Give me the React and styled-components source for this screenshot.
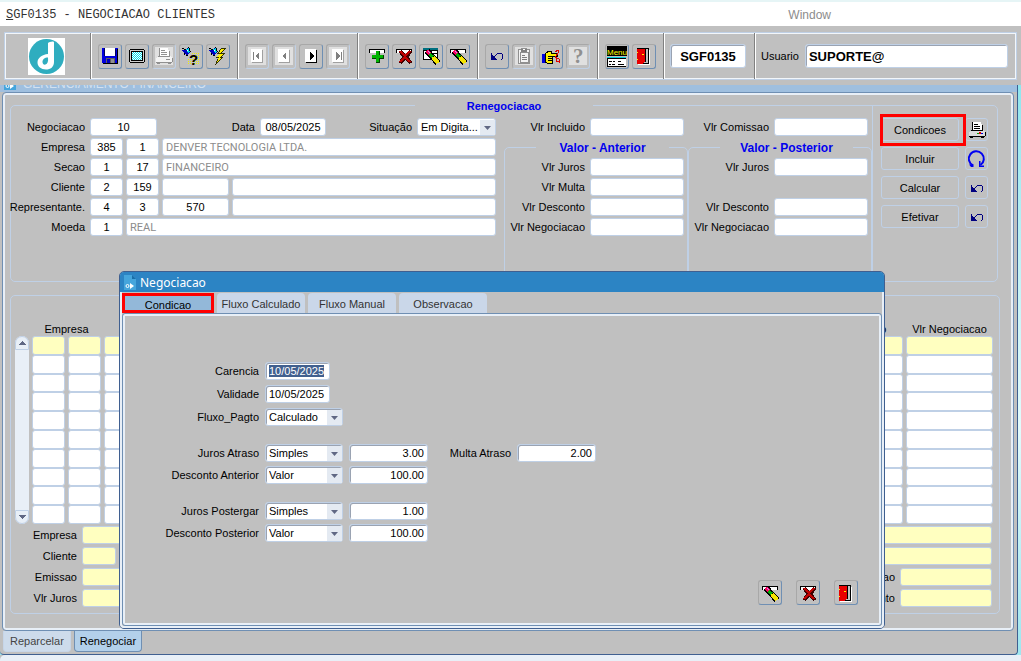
import React from 'react';
import styled, { createGlobalStyle, css } from 'styled-components';

const color = {
  face: '#c0c0c0',
  line: '#bfd0e6',
  light: '#e8eff7',
  steel: '#6f8fb3',
  dark: '#3f5f90',
  title: '#2c84c4',
  yellow: '#ffffc0',
  red: '#ff0000',
  navy: '#000080',
};

const GlobalStyle = createGlobalStyle`
  * {
    box-sizing: border-box;
  }

  body {
    margin: 0;
    background: ${color.face};
    color: #000;
    font-family: 'Liberation Sans', Arial, sans-serif;
    font-size: 11px;
    line-height: 14px;
  }

  button,
  input,
  select {
    font: inherit;
    color: inherit;
  }
`;

const Shell = styled.div`
  display: flex;
  flex-direction: column;
  min-height: 100vh;
`;

const MenuBar = styled.nav`
  display: flex;
  align-items: center;
  height: 26px;
  padding: 2px 190px 0 6px;
  border-top: 2px solid #e6f5f6;
  background: #fff;
  color: #333;
`;

const ProgramName = styled.span`
  flex: 1;
  font-family: 'Liberation Mono', monospace;
  font-size: 12px;
`;

const MenuLink = styled.a`
  color: #8c8c8c;
  font-size: 12px;
  text-decoration: none;
`;

const Toolbar = styled.div`
  display: flex;
  height: 48px;
  margin: 6px 4px 5px;
  border: 1px solid ${color.line};
  box-shadow: inset 1px 1px 0 #f2f6fa, inset -1px -1px 0 #f2f6fa;
`;

const LogoBox = styled.div`
  display: flex;
  align-items: center;
  justify-content: center;
  width: 85px;
  padding-right: 3px;
`;

const ToolGroup = styled.div`
  display: flex;
  align-items: center;
  gap: ${props => (props.$wide ? '6px' : '3px')};
  padding: ${props => (props.$wide ? '0 8px 0 6px' : '0 7px')};
  flex: ${props => (props.$grow ? '1' : 'none')};
  border-left: 1px solid #808080;
  box-shadow: inset 1px 0 0 #fff;
`;

const IconButton = styled.button`
  display: flex;
  align-items: center;
  justify-content: center;
  width: 24px;
  height: 25px;
  padding: 0;
  border: 1px solid #a8a8a8;
  border-right-color: ${color.steel};
  border-bottom-color: ${color.steel};
  border-radius: 3px;
  background: ${color.face};

  ${props =>
    props.disabled &&
    css`
      border-right-color: ${color.line};
      border-bottom-color: ${color.line};
    `}

  ${props =>
    props.$flat &&
    css`
      width: 23px;
      height: 23px;
      border-color: ${color.line};
    `}
`;

const TextInput = styled.input`
  width: ${props => (props.$width ? `${props.$width}px` : '0')};
  flex: ${props => (props.$width ? 'none' : '1')};
  min-width: 0;
  height: 18px;
  padding: 0 3px;
  border: 1px solid ${color.line};
  border-radius: 3px;
  outline: none;
  background: ${props => (props.$yellow ? color.yellow : '#fff')};
  text-align: ${props => props.$align || 'left'};

  &::selection {
    background: #41608f;
    color: #fff;
  }

  ${props =>
    props.$sunken &&
    css`
      box-shadow: inset 1px 1px 0 #9aa3b2;
    `}

  ${props =>
    props.$muted &&
    css`
      color: #8c8c8c;
      font-family: Roboto, sans-serif;
    `}
`;

const BigInput = styled(TextInput)`
  height: 24px;
  font-size: 13px;
  font-weight: bold;
`;

const Label = styled.label`
  width: ${props => (props.$width ? `${props.$width}px` : 'auto')};
  flex: ${props => (props.$grow ? '1' : 'none')};
  display: flex;
  justify-content: flex-end;
  white-space: nowrap;
`;

const Row = styled.div`
  display: flex;
  align-items: center;
  gap: ${props => props.$gap || 3}px;
  height: 18px;
`;

const Rows = styled.div`
  display: flex;
  flex-direction: column;
  gap: ${props => props.$gap || 2}px;
`;

const SelectBox = styled.div`
  position: relative;
  display: flex;
  width: ${props => props.$width}px;
  height: 18px;

  svg {
    position: absolute;
    top: 2px;
    right: 1px;
    pointer-events: none;
  }
`;

const Select = styled.select`
  appearance: none;
  width: 100%;
  padding: 0 16px 0 3px;
  border: 1px solid ${color.line};
  border-radius: 3px;
  outline: none;
  background: #fff;
  box-shadow: ${props => (props.$sunken ? 'inset 1px 1px 0 #9aa3b2' : 'none')};
`;

const Workspace = styled.div`
  display: flex;
  flex: 1;
  padding-right: 3px;
  background: linear-gradient(#8fe6ee, #c6f3f6 35%, #e2fbfc 60%, #9fe6ef);
`;

const MdiWindow = styled.main`
  position: relative;
  display: flex;
  flex: 1;
  flex-direction: column;
  min-width: 0;
  border-right: 1px solid ${color.dark};
  border-bottom: 1px solid ${color.dark};
  border-radius: 0 0 4px 4px;
  background: ${color.face};
`;

const MdiTitle = styled.div`
  display: flex;
  align-items: flex-end;
  gap: 7px;
  height: 7px;
  padding: 0 4px 2px;
  overflow: hidden;
  background: #9fbfdf;
  color: #d3e1f0;
  font-size: 12px;
  line-height: 12px;
`;

const TabPanel = styled.div`
  margin: 0 3px 0 2px;
  padding: 5px 12px 16px 5px;
  border: 1px solid ${color.steel};
  border-radius: 4px;
  box-shadow: inset 0 0 0 2px ${color.light};
`;

const Group = styled.fieldset`
  min-width: 0;
  margin: 0;
  padding: 0;
  border: 1px solid ${color.line};
  border-radius: 5px;
`;

const Legend = styled.legend`
  width: 178px;
  height: 14px;
  margin: 0 auto;
  padding: 0;
  color: #0000ee;
  font-weight: bold;
  line-height: 16px;
  text-align: center;
`;

const ValueLegend = styled(Legend)`
  width: 133px;
  margin-right: 15px;
  font-size: 12px;
`;

const HeaderGroup = styled(Group)`
  margin: 0 3px 0 2px;
`;

const Columns = styled.div`
  display: flex;
`;

const Identification = styled(Rows)`
  flex: 1;
  min-width: 0;
  padding: 6px 8px 45px 0;

  label {
    margin-right: 2px;
  }
`;

const ValueColumn = styled.div`
  display: flex;
  flex-direction: column;
  width: 184px;
  padding-top: 6px;

  > div {
    padding: 0 4px;
  }
`;

const ValueGroup = styled(Group)`
  flex: 1;
  margin-top: 4px;
  padding: 4px 3px 0;
`;

const Actions = styled.div`
  display: grid;
  grid-template-columns: 78px 23px;
  grid-auto-rows: 23px;
  gap: 6px;
  align-content: start;
  width: 125px;
  margin-top: -7px;
  padding: 13px 0 0 8px;
  border-left: 1px solid ${color.line};
`;

const ActionButton = styled.button`
  position: relative;
  padding: 0;
  border: 1px solid ${color.line};
  border-radius: 3px;
  background: ${color.face};
  white-space: nowrap;

  &::after {
    content: '';
    display: ${props => (props.$marked ? 'block' : 'none')};
    position: absolute;
    inset: -5px -8px -6px -2px;
    z-index: 1;
    border: 3px solid ${color.red};
  }
`;

const ListGroup = styled(Group)`
  margin: 13px 1px 0 2px;
  padding: 26px 3px 6px 0;
`;

const ListArea = styled.div`
  display: flex;
  align-items: flex-end;
  padding-left: 4px;
`;

const ScrollBar = styled.div`
  display: flex;
  flex-direction: column;
  justify-content: space-between;
  width: 14px;
  height: 188px;
  border-radius: 7px;
  background: ${color.light};
`;

const ScrollButton = styled.button`
  display: flex;
  align-items: center;
  justify-content: center;
  height: 14px;
  padding: 0;
  border: 1px solid ${color.line};
  border-radius: ${props => (props.$down ? '0 0 7px 7px' : '7px 7px 0 0')};
  background: ${color.light};
`;

const ListTable = styled.table`
  flex: 1;
  height: 202px;
  table-layout: fixed;
  border-collapse: separate;
  border-spacing: 3px 0;

  th {
    height: 14px;
    padding: 0;
    font-weight: normal;
    white-space: nowrap;
  }

  td {
    padding: 0;
    border: 1px solid ${color.line};
    border-radius: 3px;
    background: #fff;
  }

  tbody tr:first-child td {
    background: ${color.yellow};
  }
`;

const Details = styled(Rows)`
  margin-top: 2px;
  padding-right: 4px;
`;

const BottomTabs = styled.div`
  display: flex;
  gap: 3px;
  height: 23px;
  padding-left: 3px;
`;

const BottomTab = styled.button`
  height: 21px;
  padding: 0 6px;
  border: 1px solid #c6d5e8;
  border-top: 0;
  border-radius: 0 0 4px 4px;
  background: #cddbeb;
  color: #444;
  white-space: nowrap;

  &[aria-selected='true'] {
    padding: 0 5px;
    border-color: ${color.steel};
    background: #b3d0ea;
    color: #000;
  }
`;

const StatusBar = styled.footer`
  height: 6px;
  border-radius: 5px 0 0 0;
  background: ${color.light};
`;

const Dialog = styled.section`
  position: absolute;
  top: 186px;
  right: 132px;
  left: 119px;
  z-index: 2;
  border: 1px solid ${color.dark};
  border-radius: 5px;
  background: ${color.face};
`;

const DialogTitle = styled.h2`
  display: flex;
  align-items: center;
  gap: 4px;
  height: 20px;
  margin: 0;
  padding: 1px 4px 0;
  border-radius: 4px 4px 0 0;
  background: ${color.title};
  color: #fff;
  font-family: 'Noto Sans', sans-serif;
  font-size: 12px;
  font-weight: normal;
  line-height: 18px;
`;

const DialogBody = styled.div`
  border: 2px solid ${color.light};
  border-top: 0;
  border-radius: 0 0 4px 4px;
`;

const DialogTabs = styled.div`
  display: flex;
  gap: 3px;
  height: 21px;
  padding-top: 1px;
`;

const DialogTab = styled.button`
  width: ${props => props.$width || 88}px;
  padding: 2px 0 0;
  border: 0;
  border-radius: 4px 4px 0 0;
  background: #cad7e9;
  color: #333;
  white-space: nowrap;

  &[aria-selected='true'] {
    border: 3px solid ${color.red};
    border-radius: 0;
    background: #93b8d9;
    color: #000;
  }
`;

const DialogPanel = styled.form`
  padding: 48px 23px 20px 2px;
  border: 1px solid ${color.steel};
  border-radius: 3px;
  box-shadow: inset 0 0 0 2px ${color.light};
`;

const DialogFields = styled.div`
  display: flex;
  flex-direction: column;
  gap: 18px;
`;

const DialogButtons = styled.div`
  display: flex;
  justify-content: flex-end;
  gap: 14px;
  margin-top: 38px;
`;

/* Icons are drawn on an 18px grid, one unit for each pixel */

const Icon = ({ children, width = 18, height = 18, smooth }) => (
  <svg
    width={width}
    height={height}
    viewBox={`0 0 ${width} ${height}`}
    shapeRendering={smooth ? 'auto' : 'crispEdges'}
    overflow="visible"
    aria-hidden="true"
  >
    {children}
  </svg>
);

const Logo = () => (
  <Icon width={37} height={37} smooth>
    <rect width="37" height="37" fill="#fff" />
    <circle cx="18.5" cy="18.5" r="17.5" fill="#2fadbf" />
    <path
      d="M20 5c1-1 6-2.500 6-.5V24c0 5-3.500 7.500-8 7.500-5 0-8.500-3-8.500-7 0-4.500 4.500-8 10.500-8.500z"
      fill="#fff"
    />
    <path d="M20 19.500c-3.500 0-5.500 2-5.500 4.500 0 2 1.500 3 3 2.500 2-.5 3-3 2.500-7z" fill="#2fadbf" />
  </Icon>
);

const SaveIcon = () => (
  <Icon>
    <path d="M1 1h16v16H2l-1-1z" fill="#0000e0" />
    <path d="M16 2h1v15H2v-1h14z" fill="#000" />
    <path d="M4 1h10v8H4z" fill="#fff" />
    <path d="M14 2h1v2h-1zM3 1h1v8H3zM14 4h1v5h-1z" fill="#000060" />
    <path d="M5 11h9v5H5z" fill="#606060" />
    <path d="M6 12h3v4H6z" fill="#0000c0" />
    <path d="M10 12h3v4h-3z" fill="#909090" />
  </Icon>
);

const ScreenIcon = () => (
  <Icon>
    <defs>
      <pattern id="screen-dots" width="2" height="2" patternUnits="userSpaceOnUse">
        <rect width="2" height="2" fill="#fff" />
        <path d="M0 0h1v1H0zM1 1h1v1H1z" fill="#00e0f0" />
      </pattern>
    </defs>
    <path d="M2 2h14v1h1v12h-1v1H2v-1H1V3h1z" fill="#000" />
    <path d="M2 3h14v12H2z" fill="#d0d0d0" />
    <path d="M3 4h12v10H3z" fill="#000" />
    <path d="M4 5h10v8H4z" fill="url(#screen-dots)" />
  </Icon>
);

const PrinterIcon = ({ disabled }) => {
  const ink = disabled ? '#909090' : '#000';
  return (
    <Icon>
      {disabled && <path d="M0 0h18v18H0z" fill="#e0e0e0" />}
      <path d="M4 1h9v2h1v7H4z" fill="#fff" />
      <path d="M6 3h4v1H6zM6 5h6v1H6zM6 7h6v1H6zM4 1h1v8H4zM14 4h1v6h-1z" fill={ink} />
      <path d="M1 11l2-2h12l2 2v4H1z" fill={disabled ? '#f4f4f4' : '#dcdcdc'} />
      <path d="M3 9h12v1H3zM1 15h16v1H1zM17 11h1v4h-1zM2 16h3v1H2zM13 16h3v1h-3z" fill={ink} />
      {!disabled && (
        <g>
          <path d="M9 12h2v1H9z" fill="#00a000" />
          <path d="M11 11h2v2h-2z" fill="#e00000" />
          <path d="M13 12h2v1h-2z" fill="#0000e0" />
        </g>
      )}
      {disabled && <path d="M11 12h4v1h-4z" fill={ink} />}
    </Icon>
  );
};

const Torch = () => (
  <g>
    <path d="M0 3l4-1 3-2 1 5-3 3-2-1z" fill="#0000c0" />
    <path d="M4 2l3-1 1 4-2 1z" fill="#00d8e8" />
    <path d="M0 1h2v1H0zM2 2h2v1H2zM6 0h1v1h1v3h1v1H8V4H7V1H6zM4 8h2v1H4zM2 6h1v2H2z" fill="#000" />
    <path d="M5 3h1v1H5z" fill="#fff" />
  </g>
);

const QueryIcon = () => (
  <Icon>
    <defs>
      <pattern id="query-dots" width="2" height="2" patternUnits="userSpaceOnUse">
        <path d="M0 0h1v1H0z" fill="#f0f000" />
      </pattern>
    </defs>
    <path d="M9 6h9v12H6v-6h3z" fill="url(#query-dots)" />
    <Torch />
    <text x="7" y="18" fontFamily="Liberation Sans" fontSize="15" fontWeight="bold">?</text>
  </Icon>
);

const ExecuteIcon = () => (
  <Icon>
    <Torch />
    <path d="M12 1h5l-4 5h3l-3 4h2l-9 8 3-7H7l3-4H8z" fill="#303000" />
    <path d="M12 2h3l-4 5h3l-3 4h2l-5 4 2-5H8l3-4h-1z" fill="#ffee00" />
  </Icon>
);

const arrows = {
  first: 'M5 5h1v8H5zM11 5v8l-4-4z',
  prev: 'M11 5v8l-4-4z',
  next: 'M8 5v8l4-4z',
  last: 'M7 5v8l4-4zM12 5h1v8h-1z',
};

const RecordIcon = ({ kind, disabled }) => (
  <Icon>
    {disabled && <path d="M0 0h18v18H0z" fill="#e0e0e0" />}
    <path d="M4 3h11v13H4z" fill={disabled ? '#a0a0a0' : '#000'} />
    <path d="M3 2h11v13H3z" fill="#fff" />
    <path d={arrows[kind]} fill={disabled ? '#808080' : '#000'} />
  </Icon>
);

const Slot = () => (
  <g>
    <path d="M1 2h16v4H1z" fill="#000" />
    <path d="M2 3h14v3H2z" fill="#fff" />
  </g>
);

const InsertIcon = () => (
  <Icon>
    <Slot />
    <path d="M8 4h4v4h4v4h-4v4H8v-4H4V8h4z" fill="#004000" />
    <path d="M8 4h3v4h4v3h-4v4H8v-4H4V8h4z" fill="#00b400" />
  </Icon>
);

const RemoveIcon = () => (
  <Icon>
    <Slot />
    <path d="M5 4l11 12M16 4L5 16" fill="none" stroke="#400000" strokeWidth="4" />
    <path d="M5 4l10 11M15 4L5 15" fill="none" stroke="#c00000" strokeWidth="2" />
  </Icon>
);

const Pencil = () => (
  <g fill="none">
    <path d="M5 4l11 12" stroke="#000" strokeWidth="6" />
    <path d="M5 4l4 4" stroke="#ff0060" strokeWidth="4" />
    <path d="M8 7l3 3" stroke="#00b000" strokeWidth="4" />
    <path d="M11 10l5 6" stroke="#f4e400" strokeWidth="4" />
    <path d="M9 6l2 2" stroke="#000" />
    <path d="M6 4l2 2" stroke="#c0a0ff" />
  </g>
);

const ClearBlockIcon = () => (
  <Icon>
    <path d="M1 1h15v12H1z" fill="#000" />
    <path d="M1 1h15v2H1z" fill="#007080" />
    <path d="M2 4h13v8H2z" fill="#fff" />
    <path d="M4 6h11v1H4z" fill="#000" />
    <Pencil />
  </Icon>
);

const ClearRecordIcon = () => (
  <Icon>
    <Slot />
    <Pencil />
  </Icon>
);

const UndoIcon = () => (
  <Icon>
    <path d="M3 6v7h6v-1L6 10 4 8V6z" fill={color.navy} />
    <path d="M6 10l3-3 3-1 2 1 1 2-1 3-1 1" fill="none" stroke={color.navy} />
  </Icon>
);

const ClipboardIcon = () => (
  <Icon>
    <path d="M0 0h18v18H0z" fill="#e0e0e0" />
    <path d="M3 2h3V1h6v1h3v15H3z" fill="#909090" />
    <path d="M4 3h10v13H4z" fill="#f4f4f4" />
    <path d="M5 5h8v10H5z" fill="none" stroke="#909090" />
    <path d="M6 2h6v3H6zM7 8h3v1H7zM7 10h5v1H7zM7 12h5v1H7z" fill="#808080" />
    <path d="M8 2h2v1H8z" fill="#fff" />
  </Icon>
);

const CutIcon = () => (
  <Icon>
    <path d="M0 7h3v9H0z" fill="#0000e0" />
    <path d="M3 7l4-3h2v2h6v3h-5v7H5l-2-1z" fill="#ffee00" stroke="#000" />
    <path d="M6 9h6M6 11h5M6 13h5" stroke="#000" />
    <path d="M13 5l3-2 1 2-4 5M13 10l4 2v3l-3-1v-4" fill="none" stroke="#e00000" />
  </Icon>
);

const HelpIcon = () => (
  <Icon>
    <path d="M0 0h18v18H0z" fill="#e0e0e0" />
    <text x="4" y="16" fontFamily="Liberation Serif" fontSize="21" fontWeight="bold" fill="#909090">?</text>
  </Icon>
);

const MenuIcon = () => (
  <Icon width={20} height={21}>
    <rect width="20" height="10" fill="#000" />
    <text x="0" y="9" fontFamily="Liberation Sans" fontSize="8" fill="#ffff00">Menu</text>
    <path d="M0 11h19v9H0z" fill="#fff" />
    <path d="M0 11h19v1H0z" fill="#00d0e0" />
    <path
      d="M0 12h19v1H0zM2 15h3v1H2zM6 15h2v1H6zM11 15h3v1h-3zM2 18h2v1H2zM5 18h3v1H5zM11 18h6v1h-6zM0 13h1v7H0zM0 20h19v1H0z"
      fill="#000"
    />
  </Icon>
);

const ExitIcon = () => (
  <Icon>
    <path d="M3 17h11v1H3zM14 3h1v15h-1z" fill="#fff" />
    <path d="M2 1h12v16H2z" fill="#000" />
    <path d="M9 2h4v14H9z" fill="#c0c0c0" />
    <path d="M2 2h8v12l-3 3H2z" fill="#e80000" />
    <path d="M10 2h1v13h-1z" fill="#000" />
    <path d="M7 7h2v1H7zM2 5h1v1H2zM2 12h1v1H2z" fill="#ffee00" />
  </Icon>
);

const RefreshIcon = () => (
  <Icon width={19} height={19} smooth>
    <path d="M6 16.500A7.500 7.500 0 1 1 13.500 16" fill="none" stroke="#0000f0" strokeWidth="2" />
    <path d="M12 12v6h5v-1.500h-3.500V12zM2 15.500h4.500V18H4z" fill="#0000f0" />
  </Icon>
);

const FormIcon = () => (
  <Icon width={12} height={15} smooth>
    <path d="M0 0h8l4 4v11H0z" fill="#45a5dc" />
    <path d="M8 0v4h4z" fill="#1a6ea8" />
    <path d="M6 8v6l4-3z" fill="#fff" />
    <circle cx="3.500" cy="11" r="1.500" fill="none" stroke="#fff" />
  </Icon>
);

const Caret = ({ up }) => (
  <Icon width={8} height={4}>
    <path d={up ? 'M0 4h8L4 0z' : 'M0 0h8L4 4z'} fill="#606884" />
  </Icon>
);

const SelectArrow = () => (
  <svg width="15" height="15" viewBox="0 0 15 15" aria-hidden="true">
    <path d="M0 0h15v15H0z" fill="#e4eaf2" />
    <path d="M4 6h7l-3.500 4z" fill="#606884" />
  </svg>
);

const SelectField = ({ id, width, value, sunken }) => (
  <SelectBox $width={width}>
    <Select id={id} defaultValue={value} $sunken={sunken}>
      <option>{value}</option>
    </Select>
    <SelectArrow />
  </SelectBox>
);

const ValueField = ({ id, label }) => (
  <Row $gap={5}>
    <Label htmlFor={id} $grow>{label}</Label>
    <TextInput id={id} $width={94} />
  </Row>
);

const toolGroups = [
  [
    { name: 'Salvar', icon: <SaveIcon /> },
    { name: 'Tela', icon: <ScreenIcon /> },
    { name: 'Imprimir', icon: <PrinterIcon disabled />, disabled: true },
    { name: 'Consultar', icon: <QueryIcon /> },
    { name: 'Executar', icon: <ExecuteIcon /> },
  ],
  [
    { name: 'Primeiro', icon: <RecordIcon kind="first" disabled />, disabled: true },
    { name: 'Anterior', icon: <RecordIcon kind="prev" disabled />, disabled: true },
    { name: 'Proximo', icon: <RecordIcon kind="next" /> },
    { name: 'Ultimo', icon: <RecordIcon kind="last" disabled />, disabled: true },
  ],
  [
    { name: 'Inserir', icon: <InsertIcon /> },
    { name: 'Remover', icon: <RemoveIcon /> },
    { name: 'Limpar bloco', icon: <ClearBlockIcon /> },
    { name: 'Limpar registro', icon: <ClearRecordIcon /> },
  ],
  [
    { name: 'Desfazer', icon: <UndoIcon /> },
    { name: 'Colar', icon: <ClipboardIcon />, disabled: true },
    { name: 'Recortar', icon: <CutIcon /> },
    { name: 'Ajuda', icon: <HelpIcon />, disabled: true },
  ],
  [
    { name: 'Menu', icon: <MenuIcon /> },
    { name: 'Sair', icon: <ExitIcon /> },
  ],
];

const actions = [
  { label: 'Condicoes', name: 'Imprimir', icon: <PrinterIcon />, marked: true },
  { label: 'Incluir', name: 'Atualizar', icon: <RefreshIcon /> },
  { label: 'Calcular', name: 'Desfazer calculo', icon: <UndoIcon /> },
  { label: 'Efetivar', name: 'Desfazer efetivacao', icon: <UndoIcon /> },
];

const listColumns = [33, 33, 33, 90, 90, 90, 90, 90, null, 96, 87];

const MainToolbar = () => (
  <Toolbar>
    <LogoBox>
      <Logo />
    </LogoBox>
    {toolGroups.map(group => (
      <ToolGroup key={group[0].name}>
        {group.map(tool => (
          <IconButton key={tool.name} type="button" aria-label={tool.name} disabled={tool.disabled}>
            {tool.icon}
          </IconButton>
        ))}
      </ToolGroup>
    ))}
    <ToolGroup $wide>
      <BigInput aria-label="Programa" defaultValue="SGF0135" $width={76} $align="center" $sunken />
    </ToolGroup>
    <ToolGroup $wide $grow>
      <Label htmlFor="usuario">Usuario</Label>
      <BigInput id="usuario" defaultValue="SUPORTE@" $sunken />
    </ToolGroup>
  </Toolbar>
);

const IdentificationForm = () => (
  <Identification>
    <Row>
      <Label htmlFor="negociacao" $width={74}>Negociacao</Label>
      <TextInput id="negociacao" defaultValue="10" $width={67} $align="center" />
      <Label htmlFor="data" $width={95}>Data</Label>
      <TextInput id="data" defaultValue="08/05/2025" $width={66} $align="center" />
      <Label htmlFor="situacao" $grow>Situação</Label>
      <SelectField id="situacao" width={79} value="Em Digita..." />
    </Row>
    <Row>
      <Label htmlFor="empresa" $width={74}>Empresa</Label>
      <TextInput id="empresa" defaultValue="385" $width={33} $align="center" />
      <TextInput aria-label="Filial" defaultValue="1" $width={33} $align="center" />
      <TextInput aria-label="Nome da empresa" defaultValue="DENVER TECNOLOGIA LTDA." $muted />
    </Row>
    <Row>
      <Label htmlFor="secao" $width={74}>Secao</Label>
      <TextInput id="secao" defaultValue="1" $width={33} $align="center" />
      <TextInput aria-label="Codigo da secao" defaultValue="17" $width={33} $align="center" />
      <TextInput aria-label="Nome da secao" defaultValue="FINANCEIRO" $muted />
    </Row>
    <Row>
      <Label htmlFor="cliente" $width={74}>Cliente</Label>
      <TextInput id="cliente" defaultValue="2" $width={33} $align="center" />
      <TextInput aria-label="Codigo do cliente" defaultValue="159" $width={33} $align="center" />
      <TextInput aria-label="Documento do cliente" $width={67} />
      <TextInput aria-label="Nome do cliente" />
    </Row>
    <Row>
      <Label htmlFor="representante" $width={74}>Representante.</Label>
      <TextInput id="representante" defaultValue="4" $width={33} $align="center" />
      <TextInput aria-label="Filial do representante" defaultValue="3" $width={33} $align="center" />
      <TextInput aria-label="Codigo do representante" defaultValue="570" $width={67} $align="center" />
      <TextInput aria-label="Nome do representante" />
    </Row>
    <Row>
      <Label htmlFor="moeda" $width={74}>Moeda</Label>
      <TextInput id="moeda" defaultValue="1" $width={33} $align="center" />
      <TextInput aria-label="Nome da moeda" defaultValue="REAL" $muted />
    </Row>
  </Identification>
);

const InstallmentList = () => (
  <ListGroup>
    <ListArea>
      <ScrollBar>
        <ScrollButton type="button" aria-label="Subir">
          <Caret up />
        </ScrollButton>
        <ScrollButton type="button" aria-label="Descer" $down>
          <Caret />
        </ScrollButton>
      </ScrollBar>
      <ListTable>
        <colgroup>
          {listColumns.map((width, index) => (
            <col key={index} width={width || undefined} />
          ))}
        </colgroup>
        <thead>
          <tr>
            <th colSpan={2}>Empresa</th>
            <th colSpan={7} />
            <th>Vlr Desconto</th>
            <th>Vlr Negociacao</th>
          </tr>
        </thead>
        <tbody>
          {Array.from({ length: 10 }, (_, row) => (
            <tr key={row}>
              {listColumns.map((width, index) => (
                <td key={index} />
              ))}
            </tr>
          ))}
        </tbody>
      </ListTable>
    </ListArea>
    <Details $gap={3}>
      <Row $gap={5}>
        <Label htmlFor="det-empresa" $width={66}>Empresa</Label>
        <TextInput id="det-empresa" $yellow />
      </Row>
      <Row $gap={5}>
        <Label htmlFor="det-cliente" $width={66}>Cliente</Label>
        <TextInput id="det-cliente" $width={34} $yellow />
        <TextInput aria-label="Nome do cliente" $yellow />
      </Row>
      <Row $gap={5}>
        <Label htmlFor="det-emissao" $width={66}>Emissao</Label>
        <TextInput id="det-emissao" $width={92} $yellow />
        <Label htmlFor="det-negociacao" $grow>Negociacao</Label>
        <TextInput id="det-negociacao" $width={92} $yellow />
      </Row>
      <Row $gap={5}>
        <Label htmlFor="det-juros" $width={66}>Vlr Juros</Label>
        <TextInput id="det-juros" $width={92} $yellow />
        <Label htmlFor="det-desconto" $grow>Vlr Desconto</Label>
        <TextInput id="det-desconto" $width={92} $yellow />
      </Row>
    </Details>
  </ListGroup>
);

const RateField = ({ id, label, kind, value, children }) => (
  <Row $gap={6}>
    <Label htmlFor={id} $width={134}>{label}</Label>
    <SelectField id={id} width={78} value={kind} sunken />
    <TextInput aria-label={`Valor ${label}`} defaultValue={value} $width={79} $align="right" $sunken />
    {children}
  </Row>
);

const ConditionDialog = () => (
  <Dialog role="dialog" aria-labelledby="dialog-title">
    <DialogTitle id="dialog-title">
      <FormIcon />
      Negociacao
    </DialogTitle>
    <DialogBody>
      <DialogTabs role="tablist">
        <DialogTab type="button" role="tab" aria-selected="true" $width={92}>Condicao</DialogTab>
        <DialogTab type="button" role="tab">Fluxo Calculado</DialogTab>
        <DialogTab type="button" role="tab">Fluxo Manual</DialogTab>
        <DialogTab type="button" role="tab">Observacao</DialogTab>
      </DialogTabs>
      <DialogPanel>
        <DialogFields>
          <Rows $gap={5}>
            <Row $gap={6}>
              <Label htmlFor="carencia" $width={134}>Carencia</Label>
              <TextInput
                id="carencia"
                defaultValue="10/05/2025"
                autoFocus
                onFocus={event => event.target.select()}
                $width={65}
                $sunken
              />
            </Row>
            <Row $gap={6}>
              <Label htmlFor="validade" $width={134}>Validade</Label>
              <TextInput id="validade" defaultValue="10/05/2025" $width={65} $sunken />
            </Row>
            <Row $gap={6}>
              <Label htmlFor="fluxo" $width={134}>Fluxo_Pagto</Label>
              <SelectField id="fluxo" width={78} value="Calculado" sunken />
            </Row>
          </Rows>
          <Rows $gap={4}>
            <RateField id="juros-atraso" label="Juros Atraso" kind="Simples" value="3.00">
              <Label htmlFor="multa-atraso" $width={77}>Multa Atraso</Label>
              <TextInput id="multa-atraso" defaultValue="2.00" $width={79} $align="right" $sunken />
            </RateField>
            <RateField id="desconto-anterior" label="Desconto Anterior" kind="Valor" value="100.00" />
          </Rows>
          <Rows $gap={4}>
            <RateField id="juros-postergar" label="Juros Postergar" kind="Simples" value="1.00" />
            <RateField id="desconto-posterior" label="Desconto Posterior" kind="Valor" value="100.00" />
          </Rows>
        </DialogFields>
        <DialogButtons>
          <IconButton type="button" aria-label="Limpar">
            <ClearRecordIcon />
          </IconButton>
          <IconButton type="button" aria-label="Cancelar">
            <RemoveIcon />
          </IconButton>
          <IconButton type="button" aria-label="Fechar">
            <ExitIcon />
          </IconButton>
        </DialogButtons>
      </DialogPanel>
    </DialogBody>
  </Dialog>
);

const App = () => (
  <>
    <GlobalStyle />
    <Shell>
      <MenuBar>
        <ProgramName><u>S</u>GF0135 - NEGOCIACAO CLIENTES</ProgramName>
        <MenuLink href="#window">Window</MenuLink>
      </MenuBar>
      <MainToolbar />
      <Workspace>
        <MdiWindow>
          <MdiTitle>
            <FormIcon />
            GERENCIAMENTO FINANCEIRO
          </MdiTitle>
          <TabPanel>
            <HeaderGroup>
              <Legend>Renegociacao</Legend>
              <Columns>
                <IdentificationForm />
                <ValueColumn>
                  <div>
                    <ValueField id="vlr-incluido" label="Vlr Incluido" />
                  </div>
                  <ValueGroup>
                    <ValueLegend>Valor - Anterior</ValueLegend>
                    <Rows>
                      <ValueField id="ant-juros" label="Vlr Juros" />
                      <ValueField id="ant-multa" label="Vlr Multa" />
                      <ValueField id="ant-desconto" label="Vlr Desconto" />
                      <ValueField id="ant-negociacao" label="Vlr Negociacao" />
                    </Rows>
                  </ValueGroup>
                </ValueColumn>
                <ValueColumn>
                  <div>
                    <ValueField id="vlr-comissao" label="Vlr Comissao" />
                  </div>
                  <ValueGroup>
                    <ValueLegend>Valor - Posterior</ValueLegend>
                    <Rows>
                      <ValueField id="post-juros" label="Vlr Juros" />
                      <Row />
                      <ValueField id="post-desconto" label="Vlr Desconto" />
                      <ValueField id="post-negociacao" label="Vlr Negociacao" />
                    </Rows>
                  </ValueGroup>
                </ValueColumn>
                <Actions>
                  {actions.map(action => (
                    <React.Fragment key={action.label}>
                      <ActionButton type="button" $marked={action.marked}>{action.label}</ActionButton>
                      <IconButton type="button" aria-label={action.name} $flat>
                        {action.icon}
                      </IconButton>
                    </React.Fragment>
                  ))}
                </Actions>
              </Columns>
            </HeaderGroup>
            <InstallmentList />
          </TabPanel>
          <BottomTabs role="tablist">
            <BottomTab type="button" role="tab" aria-selected="false">Reparcelar</BottomTab>
            <BottomTab type="button" role="tab" aria-selected="true">Renegociar</BottomTab>
          </BottomTabs>
          <ConditionDialog />
        </MdiWindow>
      </Workspace>
      <StatusBar />
    </Shell>
  </>
);

export default App;
